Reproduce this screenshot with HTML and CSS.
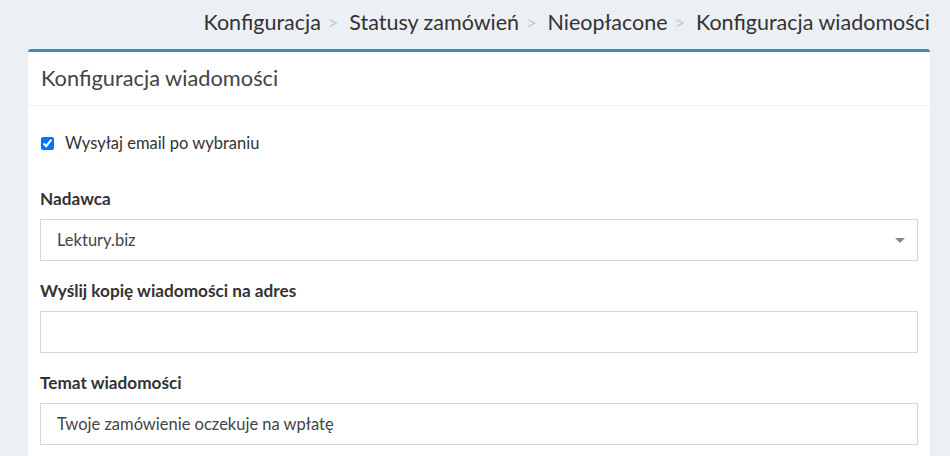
FILE: index.html
```html
<!DOCTYPE html>
<html lang="pl">
<head>
<meta charset="utf-8">
<title>Konfiguracja wiadomości</title>
<link rel="stylesheet" href="styles.css">
</head>
<body>
<div class="page">
  <nav class="crumbs">
    <span class="crumb">Konfiguracja</span><span class="sep">&gt;</span>
    <span class="crumb">Statusy zamówień</span><span class="sep">&gt;</span>
    <span class="crumb">Nieopłacone</span><span class="sep">&gt;</span>
    <span class="crumb">Konfiguracja wiadomości</span>
  </nav>
  <section class="box">
    <header class="box-header">Konfiguracja wiadomości</header>
    <div class="box-body">
      <label class="check-row"><input type="checkbox" checked> <span>Wysyłaj email po wybraniu</span></label>
      <div class="group">
        <div class="label">Nadawca</div>
        <div class="select"><span>Lektury.biz</span><span class="caret"></span></div>
      </div>
      <div class="group">
        <div class="label">Wyślij kopię wiadomości na adres</div>
        <div class="input"></div>
      </div>
      <div class="group">
        <div class="label">Temat wiadomości</div>
        <div class="input">Twoje zamówienie oczekuje na wpłatę</div>
      </div>
    </div>
  </section>
</div>
</body>
</html>
```

FILE: styles.css
```css
html, body {
  margin: 0;
  padding: 0;
  background: #ecf0f5;
  font-family: Lato, "Liberation Sans", sans-serif;
  color: #333;
}
.page {
  padding: 8px 20px 0 28px;
}
.crumbs {
  display: flex;
  justify-content: flex-end;
  align-items: center;
  height: 28px;
  font-size: 21.5px;
  line-height: 28px;
  color: #333;
  margin-bottom: 13px;
  white-space: pre;
}
.sep {
  color: #c6c6c6;
  margin: 0 11px 0 7px;
  font-size: 18px;
}
.box {
  background: #fff;
  border-top: 3px solid #3c8dbc;
  border-radius: 3px;
  box-shadow: 0 1px 1px rgba(0,0,0,0.1);
}
.box-header {
  padding: 11px 13px 13px;
  font-size: 21.8px;
  line-height: 29px;
  color: #444;
  border-bottom: 1px solid #f0f0f0;
}
.box-body {
  padding: 25px 12px 10px;
}
.check-row {
  display: flex;
  align-items: center;
  height: 24px;
  font-size: 16.5px;
  color: #333;
  margin-bottom: 32px;
}
.check-row input {
  margin: 0 11px 0 1px;
  width: 13px;
  height: 13px;
}
.group {
  margin-bottom: 18px;
}
.label {
  font-size: 17.2px;
  font-weight: bold;
  line-height: 24px;
  margin-bottom: 8px;
  color: #333;
}
.select, .input {
  box-sizing: border-box;
  height: 42px;
  border: 1px solid #d2d6de;
  padding: 0 16px;
  display: flex;
  align-items: center;
  font-size: 16.5px;
  color: #444;
}
.select {
  justify-content: space-between;
}
.caret {
  width: 0;
  height: 0;
  border-left: 5px solid transparent;
  border-right: 5px solid transparent;
  border-top: 5px solid #888;
  margin-right: -4px;
}
```
